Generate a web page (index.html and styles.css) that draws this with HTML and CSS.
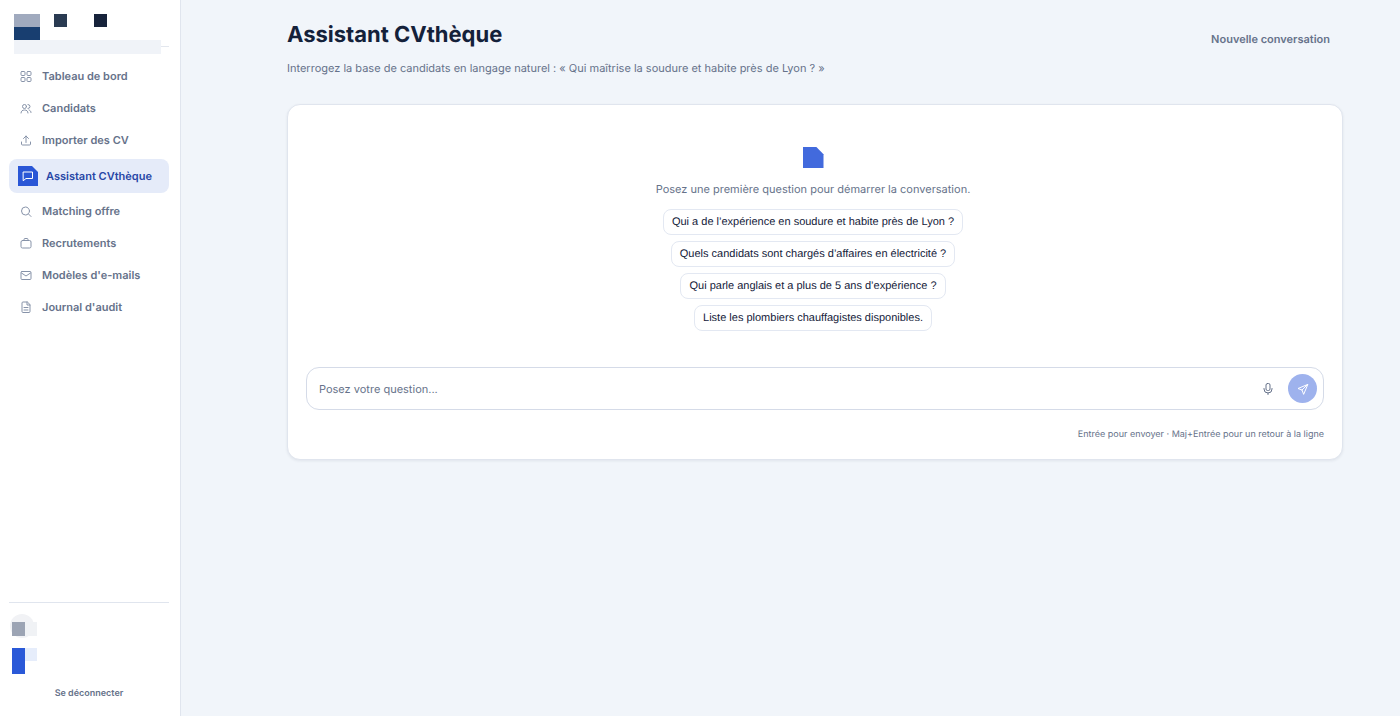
FILE: index.html
```html
<!DOCTYPE html>
<html lang="fr">
<head>
    <meta charset="UTF-8">
    <meta name="viewport" content="width=device-width, initial-scale=1">
    <title>Assistant CVthèque</title>
    <link rel="stylesheet" href="styles.css">
</head>
<body>
    <!-- SIDEBAR -->
    <aside class="sidebar">
        <a href="#" class="brand" aria-label="Accueil">
            <svg width="156" height="40" viewBox="0 0 156 40" shape-rendering="crispEdges">
                <rect x="0" y="0" width="26" height="13" fill="#a0aabe"/>
                <rect x="0" y="13" width="26" height="13" fill="#183e70"/>
                <rect x="40" y="0" width="13" height="13" fill="#2a3b52"/>
                <rect x="80" y="0" width="13" height="13" fill="#17233b"/>
                <rect x="147" y="32" width="8" height="1" fill="#e3e7ee"/>
                <rect x="0" y="26" width="147" height="14" fill="#f0f3f8"/>
            </svg>
        </a>

        <nav class="nav">
            <a href="#" class="nav-item">
                <svg class="icon" viewBox="0 0 24 24"><rect x="2" y="3" width="8" height="8" rx="2"/><rect x="14" y="3" width="8" height="8" rx="2"/><rect x="2" y="15" width="8" height="8" rx="2"/><rect x="14" y="15" width="8" height="8" rx="2"/></svg>
                Tableau de bord
            </a>
            <a href="#" class="nav-item">
                <svg class="icon" viewBox="0 0 24 24"><circle cx="9" cy="9" r="4"/><path d="M2 22c0-4 3-6 7-6s7 2 7 6M16 5a4 4 0 0 1 0 8M18 16c2 1 4 2 4 5"/></svg>
                Candidats
            </a>
            <a href="#" class="nav-item">
                <svg class="icon" viewBox="0 0 24 24"><path d="M12 17V4M7 9l5-5 5 5M3 16v4a2 2 0 0 0 2 2h14a2 2 0 0 0 2-2v-4"/></svg>
                Importer des CV
            </a>
            <a href="#" class="nav-item active" aria-current="page">
                <span class="nav-badge">
                    <svg class="icon" viewBox="0 0 24 24"><path d="M3 4h18v13H8l-5 4z"/></svg>
                </span>
                Assistant CVthèque
            </a>
            <a href="#" class="nav-item">
                <svg class="icon" viewBox="0 0 24 24"><circle cx="11" cy="12" r="8"/><path d="M17 18l5 5"/></svg>
                Matching offre
            </a>
            <a href="#" class="nav-item">
                <svg class="icon" viewBox="0 0 24 24"><rect x="2" y="7" width="20" height="15" rx="3"/><path d="M8 7V5a2 2 0 0 1 2-2h4a2 2 0 0 1 2 2v2"/></svg>
                Recrutements
            </a>
            <a href="#" class="nav-item">
                <svg class="icon" viewBox="0 0 24 24"><rect x="2" y="5" width="20" height="16" rx="2"/><path d="M3 8l9 6 9-6"/></svg>
                Modèles d'e-mails
            </a>
            <a href="#" class="nav-item">
                <svg class="icon" viewBox="0 0 24 24"><path d="M14 2H6a2 2 0 0 0-2 2v17a2 2 0 0 0 2 2h12a2 2 0 0 0 2-2V8zM14 2v6h6M8 13h8M8 18h8"/></svg>
                Journal d'audit
            </a>
        </nav>

        <div class="sidebar-footer">
            <svg class="account" width="28" height="60" viewBox="0 0 28 60">
                <circle cx="13" cy="12" r="12" fill="#f1f2f5"/>
                <g shape-rendering="crispEdges">
                    <rect x="3" y="8" width="13" height="14" fill="#9ca4b4"/>
                    <rect x="16" y="8" width="12" height="14" fill="#f0f2f5"/>
                    <rect x="3" y="34" width="13" height="26" fill="#2a59d8"/>
                    <rect x="16" y="34" width="12" height="13" fill="#e6edfb"/>
                </g>
            </svg>
            <button type="button" class="logout-btn">Se déconnecter</button>
        </div>
    </aside>

    <!-- MAIN CONTENT -->
    <main class="main-content">
        <header class="page-header">
            <div>
                <h1>Assistant CVthèque</h1>
                <p class="subtitle">Interrogez la base de candidats en langage naturel : « Qui maîtrise la soudure et habite près de Lyon ? »</p>
            </div>
            <button type="button" class="new-btn">Nouvelle conversation</button>
        </header>

        <section class="chat-card">
            <div class="empty-state">
                <span class="empty-mark"></span>
                <p>Posez une première question pour démarrer la conversation.</p>
                <div class="suggestions">
                    <button type="button">Qui a de l’expérience en soudure et habite près de Lyon ?</button>
                    <button type="button">Quels candidats sont chargés d’affaires en électricité ?</button>
                    <button type="button">Qui parle anglais et a plus de 5 ans d’expérience ?</button>
                    <button type="button">Liste les plombiers chauffagistes disponibles.</button>
                </div>
            </div>

            <form class="composer">
                <input type="text" placeholder="Posez votre question..." aria-label="Votre question">
                <button type="button" class="mic-btn" aria-label="Dicter">
                    <svg class="icon" viewBox="0 0 24 24"><rect x="8" y="1" width="8" height="14" rx="3"/><path d="M4 11v1a8 8 0 0 0 16 0v-1M12 20v3"/></svg>
                </button>
                <button type="button" class="send-btn" aria-label="Envoyer">
                    <svg class="icon" viewBox="0 0 24 24"><path d="M21 3L2 11l8 3 3 8zM21 3L10 14"/></svg>
                </button>
            </form>
            <p class="hint">Entrée pour envoyer · Maj+Entrée pour un retour à la ligne</p>
        </section>
    </main>
</body>
</html>
```
FILE: styles.css
```css
:root {
    --primary-color: #2a56d6;
    --text-color: #14213a;
    --muted-color: #66728a;
    --border-color: #e0e5ee;
    --bg-color: #f1f5fa;
}

* {
    box-sizing: border-box;
}

body {
    margin: 0;
    min-height: 100vh;
    display: flex;
    font-family: Inter, "Liberation Sans", sans-serif;
    font-size: 11px;
    color: var(--text-color);
    background: var(--bg-color);
    text-rendering: geometricPrecision;
}

button,
input {
    font-family: inherit;
    text-rendering: inherit;
}

button {
    border: none;
    background: none;
    cursor: pointer;
}

p {
    margin: 0;
}

.icon {
    width: 12px;
    height: 12px;
    flex: none;
    fill: none;
    stroke: currentColor;
    stroke-width: 2;
    stroke-linecap: round;
    stroke-linejoin: round;
}

/* SIDEBAR */
.sidebar {
    width: 181px;
    flex: none;
    display: flex;
    flex-direction: column;
    padding: 14px 11px 12px 9px;
    background: #fff;
    border-right: 1px solid var(--border-color);
}

.brand {
    height: 40px;
    margin: 0 0 7px 5px;
}

.brand svg {
    display: block;
}

.nav {
    display: flex;
    flex-direction: column;
    gap: 2px;
}

.nav-item {
    display: flex;
    align-items: center;
    gap: 10px;
    height: 30px;
    padding: 0 11px;
    border-radius: 8px;
    color: var(--muted-color);
    font-size: 11px;
    font-weight: 600;
    text-decoration: none;
    white-space: nowrap;
}

.nav-item .icon {
    color: #8793a9;
}

.nav-item.active {
    gap: 8px;
    height: 34px;
    margin: 2px 0 1px;
    padding: 0 9px;
    background: #e5ebf9;
    color: #2746a6;
}

.nav-badge {
    width: 20px;
    height: 20px;
    display: flex;
    align-items: center;
    justify-content: center;
    background: var(--primary-color);
    clip-path: polygon(0 0, 70% 0, 100% 30%, 100% 100%, 0 100%);
}

.nav-badge .icon {
    color: #fff;
}

.sidebar-footer {
    display: flex;
    flex-direction: column;
    margin-top: auto;
    padding-top: 11px;
    border-top: 1px solid var(--border-color);
}

.logout-btn {
    height: 22px;
    margin-top: 8px;
    color: var(--muted-color);
    font-size: 9px;
    font-weight: 600;
}

/* MAIN CONTENT */
.main-content {
    flex: 1;
    min-width: 0;
    padding: 20px 57px 40px 106px;
}

.page-header {
    display: flex;
    justify-content: space-between;
    align-items: flex-start;
    margin-bottom: 28px;
}

h1 {
    margin: 0 0 10px;
    font-size: 22px;
    line-height: 30px;
    font-weight: 700;
}

.subtitle {
    color: var(--muted-color);
    line-height: 16px;
}

.new-btn {
    height: 30px;
    margin-top: 4px;
    padding: 0 13px;
    color: var(--muted-color);
    font-size: 11px;
    font-weight: 600;
}

/* CHAT */
.chat-card {
    padding: 18px 18px 17px;
    background: #fff;
    border: 1px solid var(--border-color);
    border-radius: 13px;
    box-shadow: 0 1px 3px rgba(20, 33, 58, 0.08);
}

.empty-state {
    display: flex;
    flex-direction: column;
    align-items: center;
    padding: 24px 4px 36px 0;
    color: var(--muted-color);
    line-height: 16px;
}

.empty-mark {
    width: 21px;
    height: 21px;
    margin-bottom: 13px;
    background: #426add;
    clip-path: polygon(0 0, 66% 0, 100% 34%, 100% 100%, 0 100%);
}

.suggestions {
    display: flex;
    flex-direction: column;
    align-items: center;
    gap: 6px;
    margin-top: 12px;
}

.suggestions button {
    height: 26px;
    padding: 0 8px;
    border: 1px solid #e3e8f2;
    border-radius: 8px;
    color: var(--text-color);
    font-family: "Liberation Sans", Arial, sans-serif;
    font-size: 11px;
}

.composer {
    display: flex;
    align-items: center;
    height: 43px;
    padding: 0 6px 0 12px;
    border: 1px solid #d5dbe8;
    border-radius: 13px;
}

.composer input {
    flex: 1;
    min-width: 0;
    padding: 0;
    border: none;
    outline: none;
    background: none;
    color: var(--text-color);
    font-size: 11px;
}

.composer input::placeholder {
    color: var(--muted-color);
}

.mic-btn,
.send-btn {
    width: 29px;
    height: 29px;
    display: flex;
    align-items: center;
    justify-content: center;
    padding: 0;
    border-radius: 50%;
}

.mic-btn {
    margin-right: 6px;
    color: var(--muted-color);
}

.send-btn {
    background: #9eb2ed;
    color: #fff;
}

.hint {
    margin-top: 18px;
    color: var(--muted-color);
    font-size: 9px;
    line-height: 14px;
    text-align: right;
}
```
